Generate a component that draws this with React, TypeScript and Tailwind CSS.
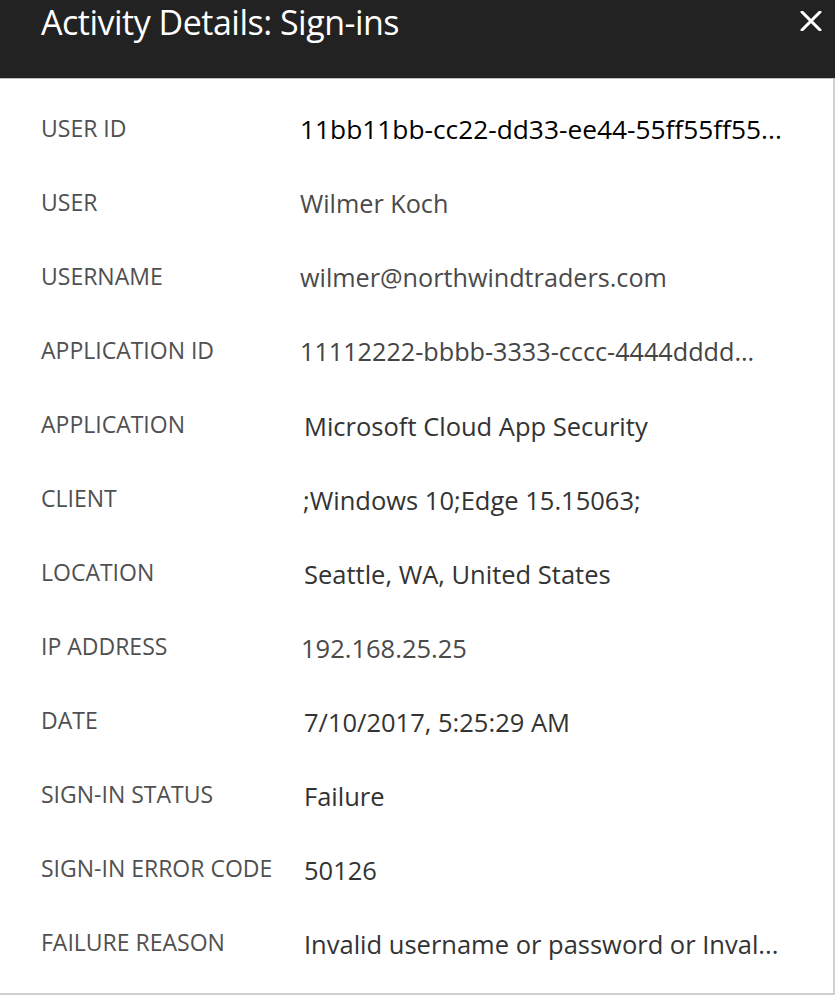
import React from "react";

type Row = { label: string; value: string; vcls: string };

const rows: Row[] = [
  { label: "USER ID", value: "11bb11bb-cc22-dd33-ee44-55ff55ff55...", vcls: "pl-0 text-black text-[26.3px]" },
  { label: "USER", value: "Wilmer Koch", vcls: "pl-0 text-[#4a4a4a] text-[25.2px]" },
  { label: "USERNAME", value: "wilmer@northwindtraders.com", vcls: "pl-0 text-[#4a4a4a] text-[25.2px]" },
  { label: "APPLICATION ID", value: "11112222-bbbb-3333-cccc-4444dddd...", vcls: "pl-0 text-[#444444] text-[25.2px]" },
  { label: "APPLICATION", value: "Microsoft Cloud App Security", vcls: "pl-[4px] text-[#333333] text-[25.5px]" },
  { label: "CLIENT", value: ";Windows 10;Edge 15.15063;", vcls: "pl-[3px] text-[#333333] text-[25.5px]" },
  { label: "LOCATION", value: "Seattle, WA, United States", vcls: "pl-[4px] text-[#333333] text-[25.5px]" },
  { label: "IP ADDRESS", value: "192.168.25.25", vcls: "pl-[1px] text-[#4a4a4a] text-[25.5px]" },
  { label: "DATE", value: "7/10/2017, 5:25:29 AM", vcls: "pl-[4px] text-[#333333] text-[25.5px]" },
  { label: "SIGN-IN STATUS", value: "Failure", vcls: "pl-[4px] text-[#333333] text-[25.5px]" },
  { label: "SIGN-IN ERROR CODE", value: "50126", vcls: "pl-[4px] text-[#333333] text-[25.5px]" },
  { label: "FAILURE REASON", value: "Invalid username or password or Inval...", vcls: "pl-[4px] text-[#333333] text-[25.5px]" },
];

export default function App() {
  return (
    <div
      className="w-[835px] h-[995px] bg-white flex flex-col overflow-hidden"
      style={{ fontFamily: '"Open Sans", "Noto Sans", sans-serif' }}
    >
      <div className="h-[79px] bg-[#222222] flex items-start justify-between pl-[41px] pr-[12px] shrink-0 border-b border-[#bdbdbd]">
        <h1 className="text-white text-[34px] leading-none mt-[5px] tracking-[-0.5px]">
          Activity Details: Sign-ins
        </h1>
        <button className="mt-[10px] w-[24px] h-[22px] flex items-center justify-center">
          <svg width="22" height="20" viewBox="0 0 22 20">
            <path d="M2 1 L20 19 M20 1 L2 19" stroke="white" strokeWidth="3" strokeLinecap="round" />
          </svg>
        </button>
      </div>
      <div className="flex-1 border-r-2 border-b-2 border-[#d0d0d0] pt-[12px]">
        {rows.map((r) => (
          <div key={r.label} className="h-[74px] flex items-center">
            <div className="w-[300px] pl-[41px] text-[23px] text-[#505050] shrink-0 pt-[1px]">
              {r.label}
            </div>
            <div className={`whitespace-nowrap pt-[4px] ${r.vcls}`}>{r.value}</div>
          </div>
        ))}
      </div>
    </div>
  );
}
